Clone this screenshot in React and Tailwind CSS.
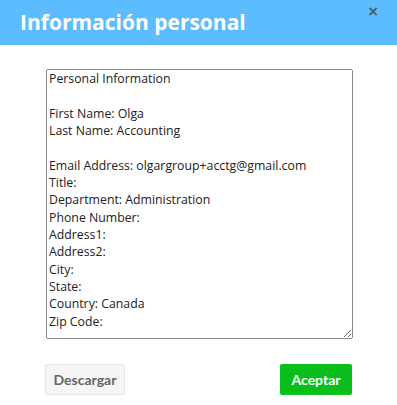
import React from "react";

const text = `Personal Information

First Name: Olga
Last Name: Accounting

Email Address: olgargroup+acctg@gmail.com
Title:
Department: Administration
Phone Number:
Address1:
Address2:
City:
State:
Country: Canada
Zip Code:`;

export default function App() {
  return (
    <div className="w-[397px] h-[405px] bg-white relative overflow-hidden">
      <div className="h-[45px] bg-[#5cbcfd] flex items-center pl-[20px]">
        <h1 className="text-white font-bold text-[21px] leading-none font-['Open_Sans',sans-serif]">
          Información personal
        </h1>
      </div>
      <button className="absolute right-[18px] top-[4px] text-[#4a5a68] text-[14px] font-bold leading-none font-['DejaVu_Sans',sans-serif]">
        ×
      </button>
      <div className="pt-[24px] pl-[46px]">
        <textarea
          readOnly
          defaultValue={text}
          className="block w-[307px] h-[270px] border border-[#8a8a8a] rounded-[2px] px-[2px] pt-0 text-[12.3px] leading-[17.35px] text-[#222] outline-none overflow-hidden resize font-['Open_Sans',sans-serif]"
        />
      </div>
      <div className="flex justify-between px-[45px] mt-[25px]">
        <button className="w-[80px] h-[31px] bg-[#f5f5f5] border border-[#e6e6e6] rounded-[2px] text-[#666] text-[14px] font-bold font-['Lato',sans-serif]">
          Descargar
        </button>
        <button className="w-[72px] h-[31px] bg-[#0abf1c] rounded-[2px] text-white text-[14px] font-bold font-['Lato',sans-serif]">
          Aceptar
        </button>
      </div>
    </div>
  );
}
